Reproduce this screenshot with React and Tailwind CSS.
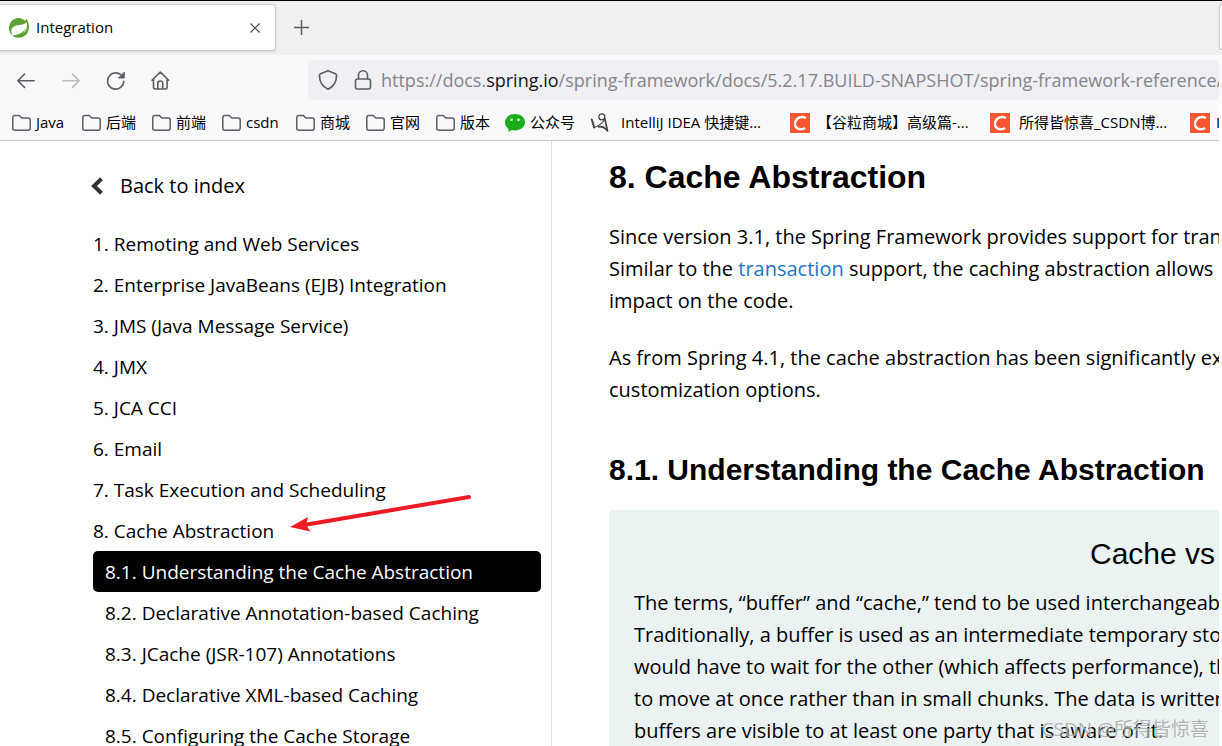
const pageFont = "font-['Open_Sans','Noto_Sans_CJK_SC',sans-serif]"

const folders = [
  { name: 'Java', width: 'w-[70px]' },
  { name: '后端', width: 'w-[70px]' },
  { name: '前端', width: 'w-[70px]' },
  { name: 'csdn', width: 'w-[74px]' },
  { name: '商城', width: 'w-[70px]' },
  { name: '官网', width: 'w-[70px]' },
  { name: '版本', width: 'w-[69px]' },
]

const chapters = [
  '1. Remoting and Web Services',
  '2. Enterprise JavaBeans (EJB) Integration',
  '3. JMS (Java Message Service)',
  '4. JMX',
  '5. JCA CCI',
  '6. Email',
  '7. Task Execution and Scheduling',
  '8. Cache Abstraction',
]

const sections = [
  '8.1. Understanding the Cache Abstraction',
  '8.2. Declarative Annotation-based Caching',
  '8.3. JCache (JSR-107) Annotations',
  '8.4. Declarative XML-based Caching',
  '8.5. Configuring the Cache Storage',
]

function SpringIcon() {
  return (
    <svg className="size-5 shrink-0" viewBox="0 0 20 20">
      <path d="M17.7 .8c.5 1 .9 2 1.300 3.200C21.300 9.500 19.600 16 14.500 18.600 9.500 21.200 3.200 19.300 1 14.500-1.500 9.300.5 3.200 5.500.9 9.300-.8 13.300 0 16 2.700c.7-.5 1.200-1.100 1.700-1.900z" fill="#5fa134" />
      <path d="M17.600 4.200C14.500 7.500 9.500 6.300 6 8c-4.300 2-4.600 6.500-2.200 8.500l.8.500c6 .2 10.500-1 12.600-5.500 1.100-2.500 1-5 .4-7.300z" fill="#fff" />
      <path d="M4.800 17.200c5.200-.5 8.900-2.500 11.500-6.500-.9 4.600-4.400 7.500-8.800 7.500-1.300 0-2.100-.3-2.700-1z" fill="#5fa134" />
      <circle cx="3.800" cy="16.800" r="1" fill="#fff" />
    </svg>
  )
}

function CsdnIcon() {
  return (
    <svg className="size-5 shrink-0" viewBox="0 0 20 20">
      <path d="M0 0h20v20H0z" fill="#fc5531" />
      <path d="M15.800 5.200C12.500 3 6.500 4 5.200 9.300c-1 4.700 2.200 7 5.800 6.900 1.600 0 2.900-.4 4-1.100" fill="none" stroke="#fff" strokeWidth="2.400" />
    </svg>
  )
}

function TabBar() {
  return (
    <div className="flex h-[55px] items-start border-t border-black bg-[#f0f0f0] pt-[3px]">
      <div className="flex h-[47px] w-[276px] items-center rounded-r border border-l-0 border-[#c9c9d0] bg-white pl-[9px] pr-[10px] shadow-sm">
        <SpringIcon />
        <span className="ml-[7px] flex-1 pb-px text-[15px]">Integration</span>
        <button className="grid size-5 place-items-center" aria-label="Close tab">
          <svg className="size-3" viewBox="0 0 12 12" stroke="#4a4a4f" strokeWidth="1.200">
            <path d="M1.500 1.500l9 9M10.500 1.500l-9 9" />
          </svg>
        </button>
      </div>
      <button className="ml-4 mt-[14px]" aria-label="New tab">
        <svg className="size-[18px]" viewBox="0 0 18 18" stroke="#5b5b66" strokeWidth="1.500">
          <path d="M9.500 2v15M2 9.500h15" />
        </svg>
      </button>
      <div className="ml-auto h-[46px] w-[3px] rounded-l border border-r-0 border-[#c9c9d0] bg-white"></div>
    </div>
  )
}

function NavBar() {
  return (
    <div className="flex h-[50px] items-center bg-[#f9f9fb]">
      <div className="flex w-[308px] shrink-0 items-center gap-[25px] pl-4">
        <button aria-label="Back">
          <svg className="size-5" viewBox="0 0 20 20" fill="none" stroke="#5b5b66" strokeWidth="1.600" strokeLinecap="round" strokeLinejoin="round">
            <path d="M18.200 10.700H1.800M8.500 4l-6.700 6.700 6.700 6.700" />
          </svg>
        </button>
        <button aria-label="Forward" disabled>
          <svg className="size-5" viewBox="0 0 20 20" fill="none" stroke="#bdbdc2" strokeWidth="1.600" strokeLinecap="round" strokeLinejoin="round">
            <path d="M1.800 10.700h16.400M11.500 4l6.700 6.700-6.700 6.700" />
          </svg>
        </button>
        <button aria-label="Reload">
          <svg className="size-5" viewBox="0 0 20 20" fill="none" stroke="#5b5b66" strokeWidth="1.600" strokeLinecap="round">
            <path d="M17.800 11.200A8.100 8.100 0 1 1 15 4.900" />
            <path d="M18.300 2.500V8h-5.500z" fill="#5b5b66" strokeWidth="1" strokeLinejoin="round" />
          </svg>
        </button>
        <button aria-label="Home">
          <svg className="size-5" viewBox="0 0 20 20" fill="none" stroke="#5b5b66" strokeWidth="1.600" strokeLinecap="round" strokeLinejoin="round">
            <path d="M1 10.300L9.300 2l8.300 8.300M2.500 9v8.500c0 .9.600 1.500 1.500 1.500h10.600c.9 0 1.500-.6 1.500-1.500V9M6.800 19v-5.500a2.500 2.500 0 0 1 5 0V19" />
          </svg>
        </button>
      </div>
      <div className="mr-[3px] flex h-10 min-w-0 flex-1 items-center overflow-hidden rounded-l bg-[#f0f0f4] pl-[10px]">
        <svg className="size-5 shrink-0" viewBox="0 0 20 20" fill="none" stroke="#5b5b66" strokeWidth="1.600" strokeLinejoin="round">
          <path d="M10 .8l7.500 3c.7.300 1.100.8 1.100 1.500C18.500 12 15.500 16.800 10 19.300 4.500 16.800 1.500 12 1.400 5.300c0-.7.400-1.200 1.100-1.500z" />
        </svg>
        <svg className="ml-[15px] size-5 shrink-0" viewBox="0 0 20 20" fill="none" stroke="#5b5b66" strokeWidth="1.600">
          <rect x="2.500" y="9" width="15" height="10" rx="2" />
          <path d="M5.500 9V5.300a4.500 4.500 0 0 1 9 0V9" />
        </svg>
        <span className="ml-2 whitespace-nowrap text-[18px] text-[#85858c]">
          https://docs.<span className="text-[#15141a]">spring.io</span>/spring-framework/docs/5.2.17.BUILD-SNAPSHOT/spring-framework-reference/
        </span>
      </div>
    </div>
  )
}

function BookmarksBar() {
  return (
    <div className="mr-[3px] flex h-9 items-center overflow-hidden whitespace-nowrap border-b border-[#cccccc] bg-[#f9f9fb] pl-3 text-[15px]">
      {folders.map((folder) => (
        <a key={folder.name} href="#" className={`flex shrink-0 items-center ${folder.width}`}>
          <svg className="mr-1 size-5 shrink-0" viewBox="0 0 20 20" fill="none" stroke="#5b5b66" strokeWidth="1.500" strokeLinejoin="round">
            <path d="M.8 4.500a2 2 0 0 1 2-2h4.400l2.600 2.500h6.400a2 2 0 0 1 2 2v8.200a2 2 0 0 1-2 2H2.800a2 2 0 0 1-2-2z" />
          </svg>
          {folder.name}
        </a>
      ))}
      <a href="#" className="flex w-[85px] shrink-0 items-center">
        <svg className="mr-[5px] size-5 shrink-0" viewBox="0 0 20 20">
          <path d="M10 1c5.500 0 10 3.500 10 8.300s-4.500 8.200-10 8.200c-1.200 0-2.300-.1-3.300-.4L3.500 19v-3.300C1.300 14.200 0 12 0 9.300 0 4.500 4.500 1 10 1z" fill="#1aad19" />
          <circle cx="6.500" cy="6.800" r="1.300" fill="#fff" />
          <circle cx="13.500" cy="6.800" r="1.300" fill="#fff" />
        </svg>
        公众号
      </a>
      <a href="#" className="flex w-[200px] shrink-0 items-center">
        <svg className="mr-[11px] size-5 shrink-0" viewBox="0 0 20 20" fill="none" stroke="#444" strokeLinecap="round">
          <circle cx="11.800" cy="3.800" r="3" strokeWidth="1.300" />
          <path d="M1.800 6.500l2.400 8" strokeWidth="2" />
          <path d="M4.200 14.500C8.500 13 12 10.500 14.800 6.500" strokeWidth="1.200" />
          <path d="M14.800 5.500l2.700 12.500" strokeWidth="1.700" />
          <path d="M8.500 13.800c3-.6 5.500.2 8 3" strokeWidth="1.700" />
        </svg>
        IntelliJ IDEA 快捷键...
      </a>
      <a href="#" className="flex w-[200px] shrink-0 items-center">
        <CsdnIcon />
        <span className="ml-[7px]">【谷粒商城】高级篇-...</span>
      </a>
      <a href="#" className="flex w-[200px] shrink-0 items-center">
        <CsdnIcon />
        <span className="ml-[9px]">所得皆惊喜_CSDN博...</span>
      </a>
      <a href="#" className="flex shrink-0 items-center">
        <CsdnIcon />
        <span className="ml-[6px]">I</span>
      </a>
    </div>
  )
}

function Sidebar() {
  return (
    <nav className="relative w-[552px] shrink-0 border-r border-[#d8e0e0] pl-[93px] pr-[10px] text-[19px]">
      <a href="#" className="-ml-[3px] mb-[17px] mt-6 flex h-[41px] items-center text-[20px]">
        <svg className="mr-4 h-[18px] w-[14px]" viewBox="0 0 14 18" fill="none" stroke="#333" strokeWidth="4">
          <path d="M11.500 1.700L4 9l7.500 7.300" />
        </svg>
        Back to index
      </a>
      <ul>
        {chapters.map((title) => (
          <li key={title}>
            <a href="#" className="block pt-px leading-10">{title}</a>
          </li>
        ))}
      </ul>
      <ul>
        {sections.map((title, i) => (
          <li key={title}>
            <a href="#" className={`block rounded-[5px] pl-3 pt-px leading-10 ${i === 0 ? 'bg-black text-white' : ''}`}>
              {title}
            </a>
          </li>
        ))}
      </ul>
      {/* Red arrow pointing at the current chapter */}
      <svg className="absolute left-[288px] top-[350px] h-[45px] w-[186px]" viewBox="0 0 186 45">
        <path d="M16 34L181 6" stroke="#ed1c24" strokeWidth="4" strokeLinecap="round" />
        <path d="M2 36L20 26l-2 8 4.500 6.500z" fill="#ed1c24" />
      </svg>
    </nav>
  )
}

function Article() {
  return (
    <main className="mr-[3px] min-w-0 flex-1 overflow-hidden whitespace-nowrap pl-[57px] text-[20px] leading-8">
      <h1 className="mt-4 font-['Liberation_Sans',sans-serif] text-[32px] font-bold leading-10">8. Cache Abstraction</h1>
      <p className="mt-6">
        Since version 3.1, the Spring Framework provides support for transparently
        <br />
        Similar to the <a href="#" className="text-[#1a76c9]">transaction</a> support, the caching abstraction allows
        <br />
        impact on the code.
      </p>
      <p className="mt-[25px]">
        As from Spring 4.1, the cache abstraction has been significantly extended
        <br />
        customization options.
      </p>
      <h2 className="mt-11 font-['Liberation_Sans',sans-serif] text-[30px] font-bold leading-10">
        8.1. Understanding the Cache Abstraction
      </h2>
      <div className="mt-5 rounded-tl bg-[#ebf2f2] px-[25px] pb-6 pt-6">
        <div className="pl-[456px] font-['Liberation_Sans',sans-serif] text-[30px] leading-10">Cache vs</div>
        <p className="mt-[13px]">
          The terms, “buffer” and “cache,” tend to be used interchangeably
          <br />
          Traditionally, a buffer is used as an intermediate temporary store
          <br />
          would have to wait for the other (which affects performance), the
          <br />
          to move at once rather than in small chunks. The data is written
          <br />
          buffers are visible to at least one party that is aware of it.
        </p>
      </div>
    </main>
  )
}

export default function App() {
  return (
    <div className={`relative flex h-screen flex-col overflow-hidden bg-white text-black ${pageFont}`}>
      <TabBar />
      <NavBar />
      <BookmarksBar />
      <div className="flex min-h-0 flex-1 overflow-hidden">
        <Sidebar />
        <Article />
      </div>
      {/* Watermark */}
      <div className="absolute bottom-[3px] right-[13px] text-[19px] text-[#a0a4a4]/80 [text-shadow:1px_1px_0_#ffffff80]">
        CSDN @所得皆惊喜
      </div>
    </div>
  )
}
